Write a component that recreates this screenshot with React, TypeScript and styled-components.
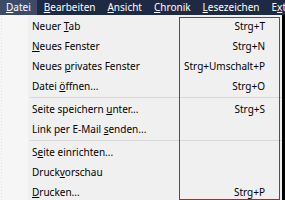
import styled, {createGlobalStyle} from 'styled-components';

const GlobalStyle = createGlobalStyle`
  html, body {
    margin: 0;
    padding: 0;
    background: #000;
  }
  body {
    width: 285px;
    height: 200px;
    overflow: hidden;
    font-family: "Noto Sans", "DejaVu Sans", sans-serif;
  }
`;

type Entry =
    | {kind: 'item'; label: string; key: number; shortcut?: string}
    | {kind: 'sep'};

const topMenus = [
    {label: 'Datei', key: 0, active: true},
    {label: 'Bearbeiten', key: 0},
    {label: 'Ansicht', key: 0},
    {label: 'Chronik', key: 0},
    {label: 'Lesezeichen', key: 0},
    {label: 'Extras', key: 1},
];

const entries: Entry[] = [
    {kind: 'item', label: 'Neuer Tab', key: 6, shortcut: 'Strg+T'},
    {kind: 'item', label: 'Neues Fenster', key: 0, shortcut: 'Strg+N'},
    {kind: 'item', label: 'Neues privates Fenster', key: 6, shortcut: 'Strg+Umschalt+P'},
    {kind: 'item', label: 'Datei öffnen...', key: 6, shortcut: 'Strg+O'},
    {kind: 'sep'},
    {kind: 'item', label: 'Seite speichern unter...', key: 16, shortcut: 'Strg+S'},
    {kind: 'item', label: 'Link per E-Mail senden...', key: 16},
    {kind: 'sep'},
    {kind: 'item', label: 'Seite einrichten...', key: 1},
    {kind: 'item', label: 'Druckvorschau', key: 5},
    {kind: 'item', label: 'Drucken...', key: 0, shortcut: 'Strg+P'},
];

const withAccessKey = (label: string, key: number) => (
    <>
        {label.slice(0, key)}
        <u>{label.charAt(key)}</u>
        {label.slice(key + 1)}
    </>
);

export default function App() {
    return (
        <>
            <GlobalStyle/>
            <Page>
                <MenuBar>
                    {topMenus.map((m) => (
                        <TopItem key={m.label} $active={!!m.active}>
                            {withAccessKey(m.label, m.key)}
                        </TopItem>
                    ))}
                </MenuBar>
                <Dropdown>
                    {entries.map((e, i) =>
                        e.kind === 'sep' ? (
                            <Separator key={i}/>
                        ) : (
                            <Item key={i}>
                                <Label>{withAccessKey(e.label, e.key)}</Label>
                                <Shortcut>{e.shortcut}</Shortcut>
                            </Item>
                        )
                    )}
                    <Highlight/>
                </Dropdown>
            </Page>
        </>
    );
}

const Page = styled.div`
  width: 285px;
  height: 200px;
  display: flex;
  flex-direction: column;
`;

const MenuBar = styled.div`
  flex: 0 0 15px;
  display: flex;
  align-items: center;
  background: #1e2943;
  color: #fff;
  font-size: 10px;
  white-space: nowrap;
  overflow: hidden;
`;

const TopItem = styled.div<{$active: boolean}>`
  flex: none;
  height: 15px;
  line-height: 15px;
  padding: 0 6px;
  margin-right: ${(p) => (p.$active ? '1px' : '0')};
  background: ${(p) => (p.$active ? '#3e4b68' : 'transparent')};

  u {
    text-decoration-thickness: 1px;
    text-underline-offset: 1px;
  }
`;

const Dropdown = styled.div`
  position: relative;
  width: 282px;
  flex: 1;
  min-height: 0;
  overflow: hidden;
  box-sizing: border-box;
  padding-top: 1px;
  background-color: #f0f0f0;
  background-image: radial-gradient(#e4e4e4 0.6px, transparent 0.7px),
  linear-gradient(#f6f6f6, #f6f6f6);
  background-size: 3px 3px, 28px 100%;
  background-repeat: repeat-y, no-repeat;
  color: #000;
  font-size: 10px;
`;

const Item = styled.div`
  height: 20px;
  display: flex;
  align-items: center;
  padding: 0 17px 0 32px;
`;

const Label = styled.span`
  flex: 1;
  white-space: nowrap;

  u {
    text-decoration-thickness: 1px;
    text-underline-offset: 1px;
  }
`;

const Shortcut = styled.span`
  white-space: nowrap;
`;

const Separator = styled.div`
  height: 1px;
  margin: 1px 0 1px 30px;
  background: #d7d7d7;
`;

const Highlight = styled.div`
  position: absolute;
  left: 179px;
  top: 2px;
  width: 101px;
  bottom: 0;
  box-sizing: border-box;
  border: 1px solid #e0101c;
  pointer-events: none;
`;
